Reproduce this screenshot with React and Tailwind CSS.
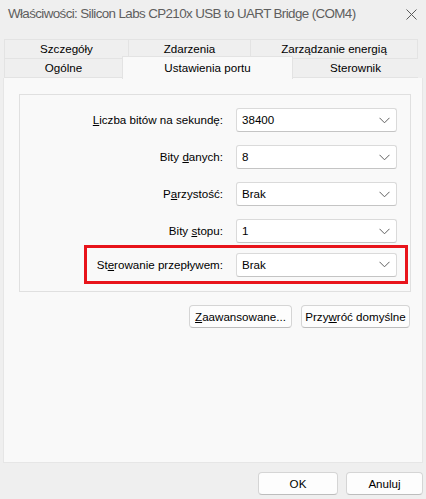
import React from "react";

function Chevron() {
  return (
    <svg width="11" height="7" viewBox="0 0 11 7" fill="none">
      <path d="M0.5 0.8 L5.5 5.8 L10.5 0.8" stroke="#5f5f5f" strokeWidth="1" />
    </svg>
  );
}

function Combo({ value }) {
  return (
    <div className="w-[161px] h-[24px] bg-white border border-[#dadada] border-b-[#c4c4c4] rounded-[3px] flex items-center justify-between pl-[5px] pr-[6px]">
      <span>{value}</span>
      <Chevron />
    </div>
  );
}

function Row({ label, value }) {
  return (
    <div className="flex items-center h-[24px]">
      <div className="w-[203px] text-right">{label}</div>
      <div className="ml-[13px]">
        <Combo value={value} />
      </div>
    </div>
  );
}

function Btn({ children, className }) {
  return (
    <button className={"h-[23px] bg-[#fdfdfd] border border-[#d5d5d5] border-b-[#bdbdbd] rounded-[4px] flex items-center justify-center text-black whitespace-nowrap " + className}>
      {children}
    </button>
  );
}

function Tab({ children, className }) {
  return (
    <div className={"flex items-center justify-center border-t border-l border-[#e3e3e3] " + className}>
      {children}
    </div>
  );
}

export default function App() {
  return (
    <div
      className="w-[426px] h-[499px] bg-[#efefef] text-[11.6px] text-black overflow-hidden flex flex-col"
      style={{ fontFamily: '"Liberation Sans", Arial, sans-serif' }}
    >
      {/* title bar */}
      <div className="h-[29px] flex items-center justify-between pl-[8px] pr-[9px]">
        <span className="text-[13.4px] tracking-[-0.62px] text-[#5e5e5e] whitespace-nowrap">
          Właściwości: Silicon Labs CP210x USB to UART Bridge (COM4)
        </span>
        <svg width="11" height="11" viewBox="0 0 11 11">
          <path d="M0.5 0.5 L10.5 10.5 M10.5 0.5 L0.5 10.5" stroke="#5a5a5a" strokeWidth="1" />
        </svg>
      </div>

      {/* tabs */}
      <div className="mt-[10px] ml-[4px] flex flex-col">
        <div className="flex h-[19px]">
          <Tab className="w-[124px]">Szczegóły</Tab>
          <Tab className="w-[122px]">Zdarzenia</Tab>
          <Tab className="w-[168px] border-r">Zarządzanie energią</Tab>
        </div>
        <div className="flex h-[20px] border-b border-[#e3e3e3] w-[414px]">
          <Tab className="w-[118px]">Ogólne</Tab>
          <div className="w-[171px] h-[23px] -mt-[2px] bg-[#f9f9f9] border-t border-l border-r border-[#e3e3e3] z-10 flex justify-center pt-[2px]">
            Ustawienia portu
          </div>
          <Tab className="w-[125px] border-l-0">Sterownik</Tab>
        </div>
      </div>

      {/* panel */}
      <div className="ml-[3px] w-[420px] h-[385px] bg-[#f9f9f9] border-l border-r border-b border-[#e6e6e6] pt-[16px] pl-[15px] flex flex-col">
        <div className="w-[392px] h-[198px] border border-[#e0e0e0] pt-[13px] flex flex-col">
          <div className="flex flex-col gap-[13px]">
            <Row label={<><u>L</u>iczba bitów na sekundę:</>} value="38400" />
            <Row label={<>Bity <u>d</u>anych:</>} value="8" />
            <Row label={<>P<u>a</u>rzystość:</>} value="Brak" />
            <Row label={<>Bity <u>s</u>topu:</>} value="1" />
          </div>
          <div className="mt-[2px] ml-[64px] w-[324px] h-[39px] border-[3px] border-[#e8141b] flex items-center justify-end pr-[8px]">
            <span className="text-right">
              St<u>e</u>rowanie przepływem:
            </span>
            <div className="ml-[13px]">
              <Combo value="Brak" />
            </div>
          </div>
        </div>

        <div className="mt-[13px] flex justify-end gap-[9px] pr-[12px]">
          <Btn className="w-[103px]"><span><u>Z</u>aawansowane...</span></Btn>
          <Btn className="w-[109px]"><span>Przy<u>w</u>róć domyślne</span></Btn>
        </div>
      </div>

      {/* bottom buttons */}
      <div className="mt-[9px] flex justify-end gap-[8px] pr-[3px]">
        <Btn className="w-[80px]">OK</Btn>
        <Btn className="w-[77px]">Anuluj</Btn>
      </div>
    </div>
  );
}
